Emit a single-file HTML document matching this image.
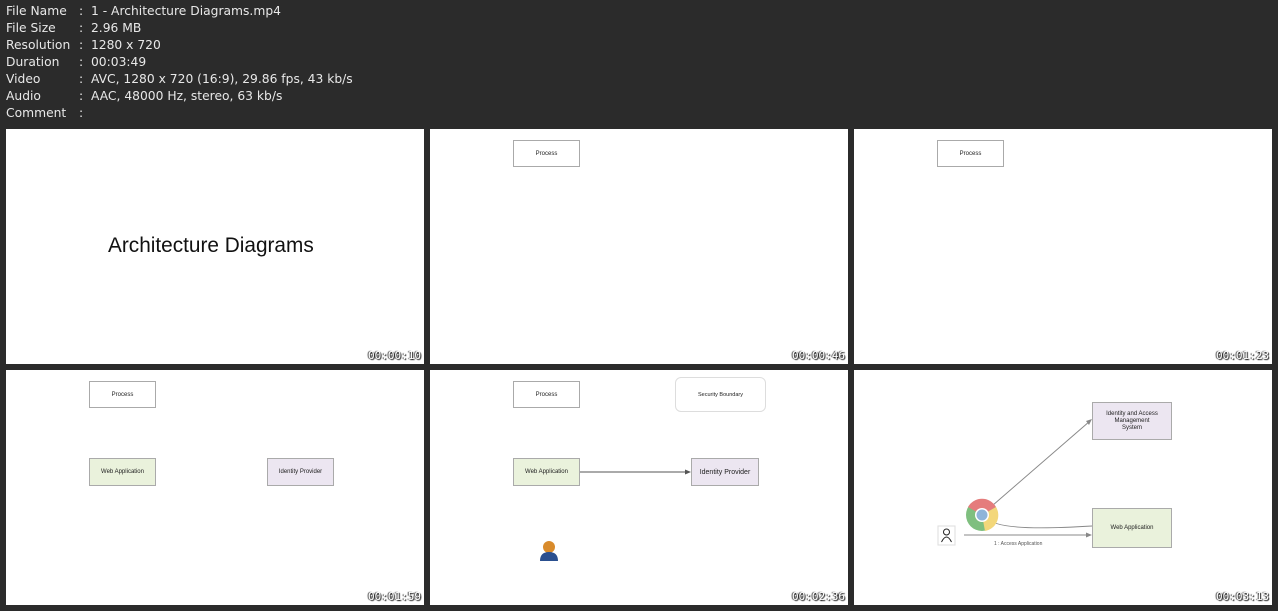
<!DOCTYPE html><html><head><style>
body{margin:0;width:1278px;height:611px;background:#2b2b2b;overflow:hidden;position:relative;font-family:"DejaVu Sans","Liberation Sans",sans-serif}
.hdr{position:absolute;left:6px;top:3px;color:#e8e8e8;font-size:12.3px;line-height:17px}
.hdr span{display:inline-block;width:73px}
.t{position:absolute;width:418px;height:235px;background:#fff;overflow:hidden}
.ts{position:absolute;right:3px;bottom:2px;font-family:"DejaVu Sans Mono",monospace;font-size:11px;color:#fff;text-shadow:1px 1px 1px #000,-1px 0 1px #333}
.b{position:absolute;border:1px solid #aaa;box-sizing:border-box;font-family:"Liberation Sans",sans-serif;font-size:6px;color:#222;display:flex;align-items:center;justify-content:center;text-align:center}
.g{background:#eaf2dc}.p{background:#ece6f1}
</style></head><body>
<div class="hdr">
<div><span>File Name</span>:&nbsp; 1 - Architecture Diagrams.mp4</div>
<div><span>File Size</span>:&nbsp; 2.96 MB</div>
<div><span>Resolution</span>:&nbsp; 1280 x 720</div>
<div><span>Duration</span>:&nbsp; 00:03:49</div>
<div><span>Video</span>:&nbsp; AVC, 1280 x 720 (16:9), 29.86 fps, 43 kb/s</div>
<div><span>Audio</span>:&nbsp; AAC, 48000 Hz, stereo, 63 kb/s</div>
<div><span>Comment</span>:</div>
</div>

<div class="t" style="left:6px;top:129px">
<div style="position:absolute;left:102px;top:105px;font-family:'Liberation Sans',sans-serif;font-size:20.8px;color:#111">Architecture Diagrams</div>
<div class="ts">00:00:10</div></div>

<div class="t" style="left:430px;top:129px">
<div class="b" style="left:83px;top:11px;width:67px;height:27px">Process</div>
<div class="ts">00:00:46</div></div>

<div class="t" style="left:854px;top:129px">
<div class="b" style="left:83px;top:11px;width:67px;height:27px">Process</div>
<div class="ts">00:01:23</div></div>

<div class="t" style="left:6px;top:370px">
<div class="b" style="left:83px;top:11px;width:67px;height:27px">Process</div>
<div class="b g" style="left:83px;top:88px;width:67px;height:28px">Web Application</div>
<div class="b p" style="left:261px;top:88px;width:67px;height:28px">Identity Provider</div>
<div class="ts">00:01:59</div></div>

<div class="t" style="left:430px;top:370px">
<div class="b" style="left:83px;top:11px;width:67px;height:27px">Process</div>
<div class="b" style="left:245px;top:7px;width:91px;height:35px;border-color:#ddd;border-radius:6px;font-size:5.5px">Security Boundary</div>
<div class="b g" style="left:83px;top:88px;width:67px;height:28px">Web Application</div>
<div class="b p" style="left:261px;top:88px;width:68px;height:28px;font-size:7px">Identity Provider</div>
<svg style="position:absolute;left:0;top:0" width="418" height="235"><line x1="150" y1="102" x2="258" y2="102" stroke="#555"/><polygon points="261,102 255,99.5 255,104.5" fill="#555"/>
<circle cx="119" cy="177" r="6" fill="#d98b2b"/><path d="M110 191 Q110 182 119 182 Q128 182 128 191 Z" fill="#2a4f8f"/></svg>
<div class="ts">00:02:36</div></div>

<div class="t" style="left:854px;top:370px">
<div class="b p" style="left:238px;top:32px;width:80px;height:38px;line-height:7px">Identity and Access<br>Management<br>System</div>
<div class="b g" style="left:238px;top:138px;width:80px;height:40px">Web Application</div>
<svg style="position:absolute;left:0;top:0" width="418" height="235">
<path d="M131 142 L236 51" stroke="#888" fill="none"/><polygon points="238,49 232,51 235,55" fill="#888"/>
<path d="M135 148 Q140 162 238 156" stroke="#888" fill="none"/>
<line x1="110" y1="165" x2="235" y2="165" stroke="#888"/><polygon points="238,165 232,162.5 232,167.5" fill="#888"/>
<circle cx="128" cy="145" r="16" fill="#7fbf7f"/><path d="M128 145 L114 137 A16 16 0 0 1 142 137 Z" fill="#e57c7c"/><path d="M128 145 L142 137 A16 16 0 0 1 131 161 Z" fill="#f3d77a"/>
<circle cx="128" cy="145" r="7" fill="#fff"/><circle cx="128" cy="145" r="5.5" fill="#8fb4d9"/>
<rect x="84" y="156" width="17" height="19" fill="#fff" stroke="#ddd"/><circle cx="92.5" cy="162" r="3" fill="none" stroke="#222"/><path d="M87.5 172 Q92.5 162 97.5 172" fill="none" stroke="#222"/>
<text x="140" y="175" font-family="Liberation Sans" font-size="5" fill="#555">1 : Access Application</text></svg>
<div class="ts">00:03:13</div></div>
</body></html>
